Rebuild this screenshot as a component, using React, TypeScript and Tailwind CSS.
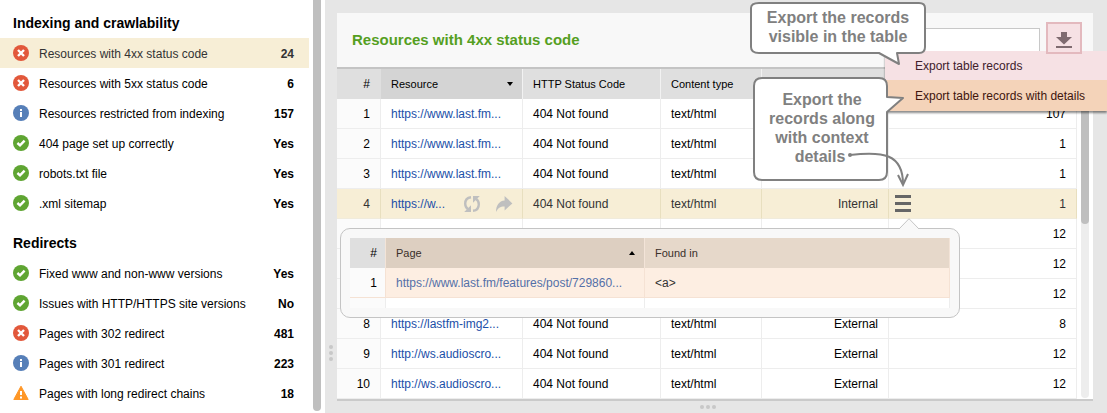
import clsx from "clsx";

type Status = "error" | "info" | "ok" | "warning";

const sections: {
  title: string;
  items: { status: Status; label: string; value: string; active?: boolean }[];
}[] = [
  {
    title: "Indexing and crawlability",
    items: [
      { status: "error", label: "Resources with 4xx status code", value: "24", active: true },
      { status: "error", label: "Resources with 5xx status code", value: "6" },
      { status: "info", label: "Resources restricted from indexing", value: "157" },
      { status: "ok", label: "404 page set up correctly", value: "Yes" },
      { status: "ok", label: "robots.txt file", value: "Yes" },
      { status: "ok", label: ".xml sitemap", value: "Yes" },
    ],
  },
  {
    title: "Redirects",
    items: [
      { status: "ok", label: "Fixed www and non-www versions", value: "Yes" },
      { status: "ok", label: "Issues with HTTP/HTTPS site versions", value: "No" },
      { status: "error", label: "Pages with 302 redirect", value: "481" },
      { status: "info", label: "Pages with 301 redirect", value: "223" },
      { status: "warning", label: "Pages with long redirect chains", value: "18" },
    ],
  },
];

const rows: {
  url?: string;
  code?: string;
  type?: string;
  scope?: string;
  count: number;
  active?: boolean;
}[] = [
  { url: "https://www.last.fm...", code: "404 Not found", type: "text/html", count: 107 },
  { url: "https://www.last.fm...", code: "404 Not found", type: "text/html", count: 1 },
  { url: "https://www.last.fm...", code: "404 Not found", type: "text/html", count: 1 },
  {
    url: "https://w...",
    code: "404 Not found",
    type: "text/html",
    scope: "Internal",
    count: 1,
    active: true,
  },
  { count: 12 },
  { count: 12 },
  { count: 12 },
  { url: "https://lastfm-img2...", code: "404 Not found", type: "text/html", scope: "External", count: 8 },
  { url: "http://ws.audioscro...", code: "404 Not found", type: "text/html", scope: "External", count: 12 },
  { url: "http://ws.audioscro...", code: "404 Not found", type: "text/html", scope: "External", count: 12 },
];

function StatusIcon({ status }: { status: Status }) {
  if (status === "warning") {
    return (
      <svg viewBox="0 0 16 16" className="size-4 shrink-0" aria-hidden="true">
        <path d="M8 1.2 15.2 14.5H.8Z" fill="#ff9726" stroke="#ff9726" strokeLinejoin="round" />
        <path d="M8 6v4M8 11.4v2" stroke="#fff" strokeWidth="2" />
      </svg>
    );
  }
  return (
    <svg viewBox="0 0 16 16" className="size-4 shrink-0" aria-hidden="true">
      {status === "error" && (
        <>
          <circle cx="8" cy="8" r="8" fill="#e2583b" />
          <path d="m5 5 6 6M11 5l-6 6" stroke="#fff" strokeWidth="2.4" />
        </>
      )}
      {status === "info" && (
        <>
          <circle cx="8" cy="8" r="8" fill="#567fb8" />
          <path d="M8 4v2M8 7v5" stroke="#fff" strokeWidth="2" />
        </>
      )}
      {status === "ok" && (
        <>
          <circle cx="8" cy="8" r="8" fill="#5fa532" />
          <path d="m4.4 8 2.6 2.4 4.6-4.8" stroke="#fff" strokeWidth="2.4" fill="none" />
        </>
      )}
    </svg>
  );
}

function Dots({ vertical }: { vertical?: boolean }) {
  return (
    <div className={clsx("flex gap-0.5", vertical && "flex-col")}>
      <span className="size-1 rounded-full bg-[#c8c8c8]" />
      <span className="size-1 rounded-full bg-[#c8c8c8]" />
      <span className="size-1 rounded-full bg-[#c8c8c8]" />
    </div>
  );
}

function Sidebar() {
  return (
    <aside className="flex w-[325px] shrink-0 bg-white">
      <nav className="flex-1">
        {sections.map((section) => (
          <section key={section.title} className="pt-2 not-first:pt-2.5">
            <h2 className="h-[30px] pl-[13px] text-[14px] leading-[30px] font-bold">{section.title}</h2>
            <ul>
              {section.items.map((item) => (
                <li key={item.label}>
                  <a
                    href="#"
                    className={clsx(
                      "flex h-[30px] items-center gap-2.5 pr-[15px] pl-[13px]",
                      item.active && "bg-[#f7eed6] text-[#333]"
                    )}
                  >
                    <StatusIcon status={item.status} />
                    <span className="flex-1 pt-0.5 whitespace-nowrap">{item.label}</span>
                    <span className="pt-0.5 font-bold">{item.value}</span>
                  </a>
                </li>
              ))}
            </ul>
          </section>
        ))}
      </nav>
      <div className="flex w-4 justify-center pb-0.5">
        <div className="w-2 rounded-b-full bg-[#bfbfbf]" />
      </div>
    </aside>
  );
}

function RecordsTable() {
  return (
    <table className="flex-1 table-fixed border-separate border-spacing-0 bg-white">
      <colgroup>
        <col className="w-[44px]" />
        <col className="w-[142px]" />
        <col className="w-[138px]" />
        <col className="w-[101px]" />
        <col className="w-[127px]" />
        <col />
      </colgroup>
      <thead className="bg-[#dfdfdf] text-left text-[11px] *:*:border-r *:*:border-[#f2f2f2] *:*:px-2.5 *:*:font-normal">
        <tr>
          <th className="h-[30px] border-[#dfdfdf]! text-right text-[12px]">#</th>
          <th className="bg-[#d4d4d4]">
            <div className="flex items-center justify-between">
              Resource
              <svg viewBox="0 0 6 4" className="-mr-px h-1 w-1.5" aria-hidden="true">
                <path d="M0 0h6L3 4Z" />
              </svg>
            </div>
          </th>
          <th>HTTP Status Code</th>
          <th>Content type</th>
          <th />
          <th />
        </tr>
      </thead>
      <tbody>
        {rows.map((row, index) => (
          <tr
            key={index}
            className={clsx(
              "*:h-[30px] *:border-r *:border-b *:px-2.5 *:whitespace-nowrap",
              row.active
                ? "bg-[#f7eed6] text-[#333] *:border-r-[#e8dfbf] *:border-b-[#f0ebdc]"
                : "*:border-[#ededed]"
            )}
          >
            <td className={clsx("text-right", !row.active && "bg-[#fbfbfb]")}>{index + 1}</td>
            <td>
              <div className="flex items-center">
                {row.url && (
                  <a href="#" className="flex-1 text-[#1b4fa8]">
                    {row.url}
                  </a>
                )}
                {row.active && (
                  <div className="-mr-px flex gap-3.5 text-[#bfbfbf]">
                    <button type="button" aria-label="Recheck">
                      <svg viewBox="0 0 18 18" className="size-[18px]" fill="none" stroke="currentColor" strokeWidth="2.4">
                        <path d="M8 2.2C4.2 2.6 2.2 5.4 2.2 8.8c0 2.2 1 4 2.6 5.2" />
                        <path d="M10 15.8c3.8-.4 5.8-3.2 5.8-6.6 0-2.2-1-4-2.6-5.2" />
                        <path d="M8 17V10.2L1.2 17ZM10 1v6.8L16.8 1Z" fill="currentColor" stroke="none" />
                      </svg>
                    </button>
                    <button type="button" aria-label="Open">
                      <svg viewBox="0 0 18 18" className="size-[18px]" fill="currentColor">
                        <path d="M9.6 1 17.4 8.4 9.6 15.4V11.4C5.6 11.2 3 12.8 1 17 1 10.8 4 6 9.6 5.6Z" />
                      </svg>
                    </button>
                  </div>
                )}
              </div>
            </td>
            <td>{row.code}</td>
            <td>{row.type}</td>
            <td className="text-right">{row.scope}</td>
            <td>
              <div className="flex items-center justify-end">
                {row.active && (
                  <button
                    type="button"
                    aria-label="Details"
                    className="mr-auto -ml-1 flex w-4 flex-col gap-1"
                  >
                    <span className="h-[3px] bg-[#666]" />
                    <span className="h-[3px] bg-[#666]" />
                    <span className="h-[3px] bg-[#666]" />
                  </button>
                )}
                {row.count}
              </div>
            </td>
          </tr>
        ))}
      </tbody>
    </table>
  );
}

function DetailsPopup() {
  return (
    <div className="absolute top-[159px] right-[133px] left-[3px] rounded-[10px] border border-[#c4c4c4] bg-[#f8f8f8] p-[9px]">
      <svg viewBox="0 0 20 11" className="absolute -top-[11px] right-10 h-[11px] w-5" aria-hidden="true">
        <path d="M0 11 10 .7 20 11" fill="#f8f8f8" stroke="#c4c4c4" />
      </svg>
      <table className="w-full table-fixed border-separate border-spacing-0 bg-white">
        <colgroup>
          <col className="w-[36px]" />
          <col className="w-[259px]" />
          <col />
        </colgroup>
        <thead className="text-left text-[11px] text-[#3a302a]">
          <tr className="*:h-[30px] *:border-r *:border-[#f3e4d8] *:font-normal">
            <th className="bg-[#dfdfdf] pr-2 text-right text-[12px] text-black">#</th>
            <th className="bg-[#ddcfc1] px-2.5">
              <div className="flex items-center justify-between">
                Page
                <svg viewBox="0 0 6 4" className="-mr-px h-1 w-1.5" aria-hidden="true">
                  <path d="M0 4h6L3 0Z" />
                </svg>
              </div>
            </th>
            <th className="bg-[#e6d8ca] px-2.5">Found in</th>
          </tr>
        </thead>
        <tbody>
          <tr className="*:h-[30px] *:border-r *:border-b *:border-[#f5e2d4]">
            <td className="bg-[#fbfbfb] pr-2 text-right">1</td>
            <td className="bg-[#fdeee2] px-2.5">
              <a href="#" className="whitespace-nowrap text-[#5470a8]">
                https://www.last.fm/features/post/729860...
              </a>
            </td>
            <td className="bg-[#fdeee2] px-2.5 text-[#333]">&lt;a&gt;</td>
          </tr>
          <tr className="*:h-2.5 *:border-r *:border-[#ededed]">
            <td className="bg-[#fbfbfb]" />
            <td />
            <td />
          </tr>
        </tbody>
      </table>
    </div>
  );
}

function ExportMenu() {
  return (
    <div className="absolute top-[51px] right-0 w-[222px] text-[#40202b] shadow-[0_2px_2px_rgba(0,0,0,0.45)]">
      <button type="button" className="block h-[29px] w-full bg-[#f6e1e4] pl-[30px] text-left">
        Export table records
      </button>
      <button type="button" className="block h-[31px] w-full bg-[#f4d3b9] pl-[30px] text-left text-[#40150d]">
        Export table records with details
      </button>
    </div>
  );
}

function Callouts() {
  return (
    <div className="pointer-events-none absolute top-0 right-[179px] h-[192px] w-[180px] text-center text-[16px] leading-[19px] font-bold text-[#808080]">
      <svg viewBox="0 0 180 192" className="absolute inset-0 overflow-visible" aria-hidden="true">
        <g fill="#fff" stroke="#808080" strokeWidth="2" strokeLinejoin="round">
          <path d="M11 3H171Q177 3 177 8V47Q177 53 171 53H149L151 64 131 53H11Q3 53 3 47V8Q3 3 11 3Z" />
          <path d="M14 78H131Q139 78 139 86V97L155 98 139 112V172Q139 180 131 180H14Q6 180 6 172V86Q6 78 14 78Z" />
        </g>
        <g fill="none" stroke="#808080" strokeWidth="2">
          <path d="M102 155C135 151 155 154 155 184" />
          <path d="m150 175 5 10 5-11" />
          <circle cx="102" cy="155" r="1" fill="#808080" />
        </g>
      </svg>
      <p className="relative pt-2">
        Export the records
        <br />
        visible in the table
      </p>
      <p className="relative mr-9 ml-1 pt-11">
        Export the
        <br />
        records along
        <br />
        with context
        <br />
        <span className="mr-1">details</span>
      </p>
    </div>
  );
}

export default function App() {
  return (
    <div className="flex min-h-screen bg-[#e6e6e6] font-['Liberation_Sans',Arial,sans-serif] text-[12px] leading-4 text-black">
      <Sidebar />
      <main className="relative flex min-w-0 flex-1 pr-3.5">
        <div className="flex w-3 shrink-0 flex-col items-center justify-end pb-13">
          <Dots vertical />
        </div>
        <div className="flex min-w-0 flex-1 flex-col pt-[13px]">
          <div className="border-b-2 border-[#cacaca] bg-white">
            <header className="flex h-14 items-center border-b-2 border-[#c4c4c4] bg-[#f8f8f8] pr-[11px] pl-[15px]">
              <h1 className="flex-1 text-[15px] font-bold text-[#559f1f]">Resources with 4xx status code</h1>
              <input
                type="text"
                aria-label="Search"
                className="mr-1.5 h-6 w-[180px] border border-[#c8c8c8] bg-white px-2 outline-none"
              />
              <button
                type="button"
                aria-label="Download"
                className="relative z-10 mb-1 flex h-8 w-9 items-center justify-center border-2 border-[#e3b9be] bg-[#f6e1e4] pt-1"
              >
                <svg viewBox="0 0 16 16" className="size-4" fill="#7f6b70">
                  <path d="M5 0h6v5h5l-8 7.5L0 5h5ZM0 14h16v2H0Z" />
                </svg>
              </button>
            </header>
            <div className="relative flex">
              <RecordsTable />
              <div className="flex w-4 shrink-0 justify-center pt-[30px] pb-px">
                <div className="w-2 rounded-full bg-[#ededed]">
                  <div className="h-[125px] rounded-b-full bg-[#bfbfbf]" />
                </div>
              </div>
              <DetailsPopup />
            </div>
          </div>
          <div className="flex h-3 items-center justify-center self-stretch pr-3.5">
            <Dots />
          </div>
        </div>
        <ExportMenu />
        <Callouts />
      </main>
    </div>
  );
}
